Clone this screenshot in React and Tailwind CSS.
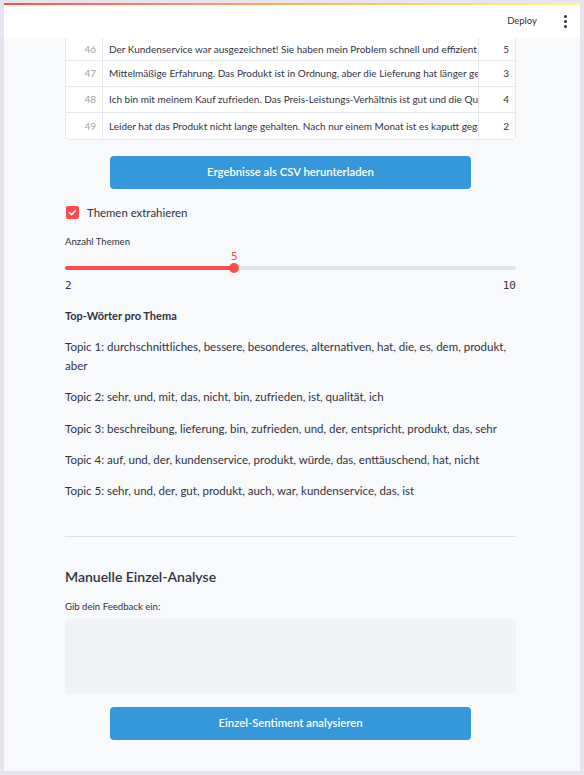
import React from "react";

const rows = [
  { i: 46, t: "Der Kundenservice war ausgezeichnet! Sie haben mein Problem schnell und effizient gelöst.", r: 5, h: "h-[23px]" },
  { i: 47, t: "Mittelmäßige Erfahrung. Das Produkt ist in Ordnung, aber die Lieferung hat länger gedauert als erwartet.", r: 3, h: "h-[26px]" },
  { i: 48, t: "Ich bin mit meinem Kauf zufrieden. Das Preis-Leistungs-Verhältnis ist gut und die Qualität stimmt.", r: 4, h: "h-[26px]" },
  { i: 49, t: "Leider hat das Produkt nicht lange gehalten. Nach nur einem Monat ist es kaputt gegangen.", r: 2, h: "h-[26px]" },
];

const topics = [
  "Topic 1: durchschnittliches, bessere, besonderes, alternativen, hat, die, es, dem, produkt, aber",
  "Topic 2: sehr, und, mit, das, nicht, bin, zufrieden, ist, qualität, ich",
  "Topic 3: beschreibung, lieferung, bin, zufrieden, und, der, entspricht, produkt, das, sehr",
  "Topic 4: auf, und, der, kundenservice, produkt, würde, das, enttäuschend, hat, nicht",
  "Topic 5: sehr, und, der, gut, produkt, auch, war, kundenservice, das, ist",
];

export default function App() {
  return (
    <div
      className="w-[584px] h-[775px] bg-[#e8e4ee] pt-[3px] pl-[4px] pr-[4px] pb-[4px] flex flex-col text-[#31333f]"
      style={{ fontFamily: "Lato, 'Noto Sans', sans-serif" }}
    >
      <div className="h-[2px] bg-gradient-to-r from-[#ff4b4b] to-[#fffd80]" />
      <div className="h-[33px] bg-white flex items-center justify-end pr-[13px]">
        <span className="text-[9.5px] text-[#31333f] mr-[27px]">Deploy</span>
        <div className="flex flex-col gap-[2px]">
          <span className="w-[3px] h-[3px] rounded-full bg-[#31333f]" />
          <span className="w-[3px] h-[3px] rounded-full bg-[#31333f]" />
          <span className="w-[3px] h-[3px] rounded-full bg-[#31333f]" />
        </div>
      </div>
      <div className="flex-1 bg-[#f8f9fb] overflow-hidden pl-[61px] pr-[60px]">
        <div className="w-[451px]">
          {/* table */}
          <div className="bg-white border-x border-b border-[#e6e9ef] rounded-b-[5px] overflow-hidden">
            {rows.map((row, idx) => (
              <div
                key={row.i}
                className={`flex ${row.h} ${idx < rows.length - 1 ? "border-b border-[#e6e9ef]" : ""} text-[10px]`}
              >
                <div className="w-[37px] shrink-0 border-r border-[#e6e9ef] flex items-center justify-end pr-[6px] text-[#9ea1aa]">
                  {row.i}
                </div>
                <div className="w-[376px] shrink-0 border-r border-[#e6e9ef] flex items-center pl-[6px] overflow-hidden whitespace-nowrap">
                  {row.t}
                </div>
                <div className="flex-1 flex items-center justify-end pr-[6px]">{row.r}</div>
              </div>
            ))}
          </div>

          {/* CSV button */}
          <div className="flex justify-center mt-[16px]">
            <button className="w-[361px] h-[33px] rounded-[4px] bg-[#3498db] text-white text-[11.3px] font-semibold">
              Ergebnisse als CSV herunterladen
            </button>
          </div>

          {/* checkbox */}
          <div className="flex items-center mt-[17px] h-[13px]">
            <div className="ml-[1px] w-[13px] h-[13px] rounded-[2px] bg-[#ff4b4b] flex items-center justify-center">
              <svg width="9" height="9" viewBox="0 0 12 12" fill="none">
                <path d="M2 6.2 L4.8 9 L10 3.3" stroke="white" strokeWidth="2" strokeLinecap="round" strokeLinejoin="round" />
              </svg>
            </div>
            <span className="ml-[8px] text-[11.4px]">Themen extrahieren</span>
          </div>

          {/* slider */}
          <div className="mt-[16px] text-[9.6px] leading-[14px]">Anzahl Themen</div>
          <div className="relative h-[28px] mt-[2px]">
            <div
              className="absolute text-[#ff4b4b] text-[11px] leading-[12px]"
              style={{ left: "166px", top: "0px", fontFamily: "'DejaVu Sans Mono', monospace" }}
            >
              5
            </div>
            <div className="absolute left-0 right-0 top-[15px] h-[4px] rounded-full bg-[#e2e5ea]" />
            <div className="absolute left-0 top-[15px] h-[4px] w-[169px] rounded-l-full bg-[#ff4b4b]" />
            <div className="absolute top-[12px] left-[164px] w-[10px] h-[10px] rounded-full bg-[#ff4b4b]" />
          </div>
          <div
            className="flex justify-between text-[11px] leading-[14px] mt-[0px]"
            style={{ fontFamily: "'DejaVu Sans Mono', monospace" }}
          >
            <span>2</span>
            <span>10</span>
          </div>

          {/* topics */}
          <div className="mt-[14px] text-[11px] font-bold leading-[18px]">Top-Wörter pro Thema</div>
          <div className="mt-[12px] text-[11.5px] leading-[19px] flex flex-col gap-[12.3px]">
            {topics.map((t) => (
              <p key={t}>{t}</p>
            ))}
          </div>

          {/* divider */}
          <div className="mt-[36px] border-t border-[#dcdfe4]" />

          <h2 className="mt-[30px] text-[14px] font-semibold text-[#31333f] leading-[20px]">Manuelle Einzel-Analyse</h2>
          <div className="mt-[13px] text-[9.6px] leading-[14px]">Gib dein Feedback ein:</div>
          <div className="mt-[5px] h-[75px] rounded-[5px] bg-[#f0f2f6]" />

          <div className="flex justify-center mt-[13px]">
            <button className="w-[361px] h-[33px] rounded-[4px] bg-[#3498db] text-white text-[11.3px] font-semibold">
              Einzel-Sentiment analysieren
            </button>
          </div>
        </div>
      </div>
    </div>
  );
}
